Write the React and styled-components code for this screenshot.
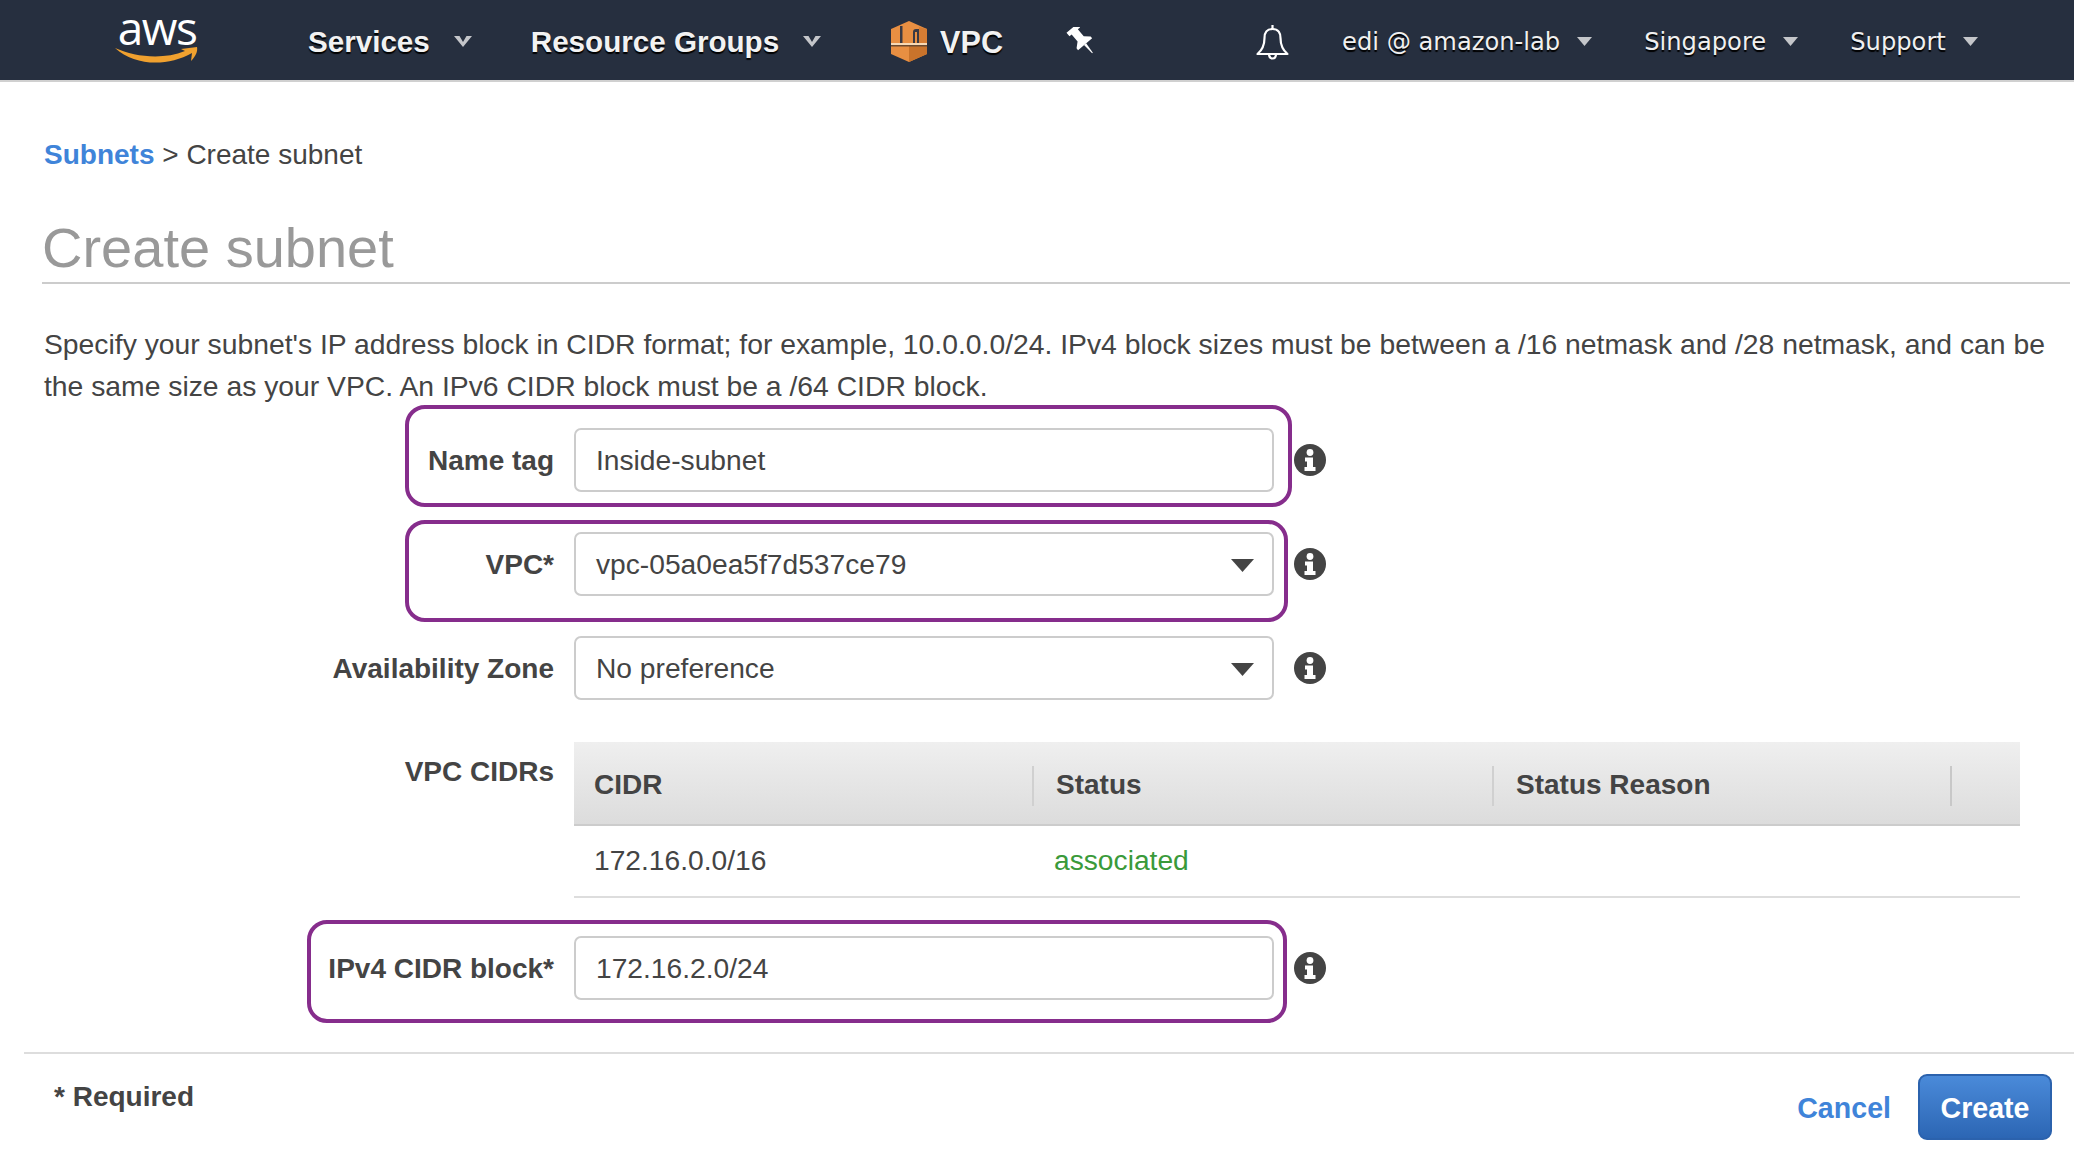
import React from "react";
import styled, { createGlobalStyle } from "styled-components";

const Global = createGlobalStyle`
  html, body { margin: 0; padding: 0; background: #fff; }
  body { width: 2074px; height: 1160px; overflow: hidden; font-family: "Liberation Sans", Arial, sans-serif; color: #444; }
  * { box-sizing: border-box; }
`;

const Header = styled.header`
  display: flex; align-items: center; height: 82px; padding-top: 3px;
  background: #262f3f; border-bottom: 2px solid #d0d0d0;
`;
const Logo = styled.div`
  display: flex; flex-direction: column; align-items: center; width: 84px; margin-left: 115px; margin-top: -11px;
`;
const LogoText = styled.span`
  font: 400 46px/40px "Open Sans", sans-serif; color: #fff; letter-spacing: -1.5px; height: 40px;
`;
const Smile = styled.svg`
  width: 84px; height: 18px; margin-top: 0;
`;
const NavMain = styled.a`
  display: flex; align-items: center; margin-left: ${p => p.$ml}px;
  font: 700 ${p => p.$size || 29.6}px/40px "Liberation Sans", sans-serif; color: #f2f2f2;
  text-shadow: 0 2px 1px #000; white-space: nowrap;
`;
const NavUser = styled.a`
  display: flex; align-items: center; margin-left: ${p => p.$ml}px;
  font: 400 24.2px/40px "DejaVu Sans", sans-serif; color: #f0f0f0;
  text-shadow: 0 2px 1px #000; white-space: nowrap;
`;
const Chevron = styled.svg`
  width: ${p => p.$w}px; height: 11px; margin-left: ${p => p.$ml}px; flex: none;
`;
const ServiceIcon = styled.svg`
  width: 36px; height: 41px; margin-left: ${p => p.$ml}px; margin-right: 13px; flex: none;
`;
const PinIcon = styled.svg`
  width: 28px; height: 28px; margin-left: 62px; margin-top: -2px; flex: none;
`;
const BellIcon = styled.svg`
  width: 35px; height: 36px; margin-left: 162px; flex: none;
`;

const Main = styled.main`
  padding: 52px 4px 0 42px;
`;
const Breadcrumb = styled.div`
  font-size: 28px; line-height: 42px; padding-left: 2px; white-space: nowrap;
`;
const Crumb = styled.a`
  color: #3f84d9; font-weight: 700;
`;
const Title = styled.h1`
  margin: 40px 0 0; font-size: 56px; font-weight: 400; line-height: 64px; color: #999;
  padding-bottom: 2px; border-bottom: 2px solid #ccc; height: 68px;
`;
const Intro = styled.p`
  margin: 39px 0 0; padding-left: 2px; font-size: 28.3px; line-height: 42px; width: 2030px;
`;
const Form = styled.div`
  margin: 21px 0 0 2px;
`;
const Row = styled.div`
  position: relative; display: flex; align-items: ${p => p.$top ? "flex-start" : "center"};
  margin-top: ${p => p.$mt || 0}px;
`;
const Label = styled.label`
  width: 510px; margin-right: 20px; text-align: right; font-weight: 700; font-size: 28px; line-height: 42px;
  padding-top: ${p => p.$pt || 1}px; white-space: nowrap; flex: none;
`;
const Field = styled.input`
  display: block; width: 700px; height: 64px; padding: 1px 20px 0; flex: none;
  border: 2px solid #ccc; border-radius: 7px; background: #fff; outline: none;
  font: 400 28.2px "Liberation Sans", sans-serif; color: #444;
`;
const Select = styled.div`
  display: flex; align-items: center; justify-content: space-between;
  width: 700px; height: 64px; padding: 1px 18px 0 20px; flex: none;
  border: 2px solid #ccc; border-radius: 7px; background: #fff;
  font-size: 28.2px; color: #444;
`;
const SelectCaret = styled.svg`
  width: 23px; height: 13px; flex: none; margin-top: 1px;
`;
const Info = styled.svg`
  width: 32px; height: 32px; margin-left: 20px; flex: none;
`;
const Highlight = styled.div`
  position: absolute; left: ${p => p.$left}px; width: ${p => p.$width}px;
  top: ${p => p.$top}px; bottom: ${p => p.$bottom}px;
  border: 4px solid #862d8c; border-radius: 20px; pointer-events: none;
`;
const Table = styled.div`
  width: 1446px; flex: none;
`;
const THead = styled.div`
  display: grid; grid-template-columns: 460px 460px 458px 68px; align-items: center; height: 84px; padding-top: 8px;
  background: linear-gradient(#efefef, #dcdcdc); border-bottom: 2px solid #ccc;
`;
const Th = styled.div`
  height: 40px; line-height: 38px; padding-left: ${p => p.$pl}px; font-weight: 700; font-size: 28px;
  border-right: 2px solid ${p => p.$sep || "transparent"}; margin-top: -2px; white-space: nowrap;
`;
const TBody = styled.div`
  display: grid; grid-template-columns: 460px 986px; align-items: center; height: 72px; padding-bottom: 2px;
  border-bottom: 2px solid #ddd;
`;
const Td = styled.div`
  padding-left: ${p => p.$pl}px; font-size: 28.2px; color: ${p => p.$color || "#444"};
`;
const Footer = styled.footer`
  display: flex; align-items: flex-start; justify-content: space-between;
  margin: 52px 0 0 24px; padding: 20px 22px 0 30px; border-top: 2px solid #ddd;
`;
const Required = styled.div`
  font-weight: 700; font-size: 28px; line-height: 42px; margin-top: 2px;
`;
const Actions = styled.div`
  display: flex; align-items: center;
`;
const Cancel = styled.a`
  font-weight: 700; font-size: 28.6px; color: #3f84d9; margin-right: 27px; padding-top: 2px;
`;
const Create = styled.button`
  width: 134px; height: 66px; padding: 2px 0 0; border: 2px solid #2b62ad; border-radius: 9px;
  background: linear-gradient(#4a8ad9, #2c66b4); color: #fff;
  font: 700 28.6px "Liberation Sans", sans-serif;
`;

const NavChevron = () => (
  <Chevron $w={20} $ml={23} viewBox="0 0 20 11"><path d="M1 0h5.500L10 6l3.500-6H19l-9 11z" fill="#c4c6ca" /></Chevron>
);
const UserCaret = () => (
  <Chevron $w={15} $ml={17} viewBox="0 0 15 11"><path d="M0 1h15L7.500 10z" fill="#c4c6ca" /></Chevron>
);
const InfoIcon = () => (
  <Info viewBox="0 0 32 32">
    <circle cx="16" cy="16" r="16" fill="#444" />
    <circle cx="16" cy="8.500" r="3.400" fill="#fff" />
    <path d="M11 13.500h8v9.500h2.500v4h-11v-4H13v-5.500h-2z" fill="#fff" />
  </Info>
);
const Caret = () => (
  <SelectCaret viewBox="0 0 23 13"><path d="M0 0h23L11.500 13z" fill="#444" /></SelectCaret>
);

export default function App() {
  return (
    <>
      <Global />
      <Header>
        <Logo>
          <LogoText>aws</LogoText>
          <Smile viewBox="0 0 84 18">
            <path d="M0 1c20 9 48 12 70 3l-4-2 16-2c1 5-2 10-6 14l1-8C52 20 20 19 0 1z" fill="#f0a12f" />
          </Smile>
        </Logo>
        <NavMain $ml={109}>Services<NavChevron /></NavMain>
        <NavMain $ml={58}>Resource Groups<NavChevron /></NavMain>
        <ServiceIcon $ml={69} viewBox="0 0 36 41">
          <path d="M18 0l18 8v25l-18 8-18-8V8z" fill="#e88f42" />
          <path d="M18 25h18v8l-18 8z" fill="#c9732b" />
          <path d="M28 6l8 2v14h-8z" fill="#d67d33" />
          <path d="M9 5h2.500v17H9z" fill="#3a3a44" />
          <path d="M22 22V11c0-2 1-3 3-3h3v14h-2V11h-2v11z" fill="#3a3a44" />
          <rect x="0" y="22" width="36" height="2" fill="#f7d9b5" />
          <rect x="0" y="24" width="36" height="1.500" fill="#6b4a30" />
        </ServiceIcon>
        <NavMain $ml={0} $size={30.6}>VPC</NavMain>
        <PinIcon viewBox="0 0 28 28">
          <g transform="translate(9 4) rotate(-40) scale(1.15)" fill="#fff">
            <path d="M-6-3H6v4H3.500v8L8 13v2H-8v-2l4.500-4V1H-6z" />
            <path d="M-1.200 15h2.400l-.8 10h-.8z" />
          </g>
        </PinIcon>
        <BellIcon viewBox="0 0 35 36" fill="none" stroke="#fff" strokeWidth="2.200">
          <path d="M17.500 5c-6 0-8 4-8 9 0 6-1 11-7 16h30c-6-5-7-10-7-16 0-5-2-9-8-9z" strokeLinejoin="round" />
          <path d="M17.500 1v4M14 30c0 6 7 6 7 0" />
        </BellIcon>
        <NavUser $ml={52}>edi @ amazon-lab<UserCaret /></NavUser>
        <NavUser $ml={52}>Singapore<UserCaret /></NavUser>
        <NavUser $ml={52}>Support<UserCaret /></NavUser>
      </Header>
      <Main>
        <Breadcrumb><Crumb>Subnets</Crumb> &gt; Create subnet</Breadcrumb>
        <Title>Create subnet</Title>
        <Intro>
          Specify your subnet's IP address block in CIDR format; for example, 10.0.0.0/24. IPv4 block sizes must be between a /16 netmask and /28 netmask, and can be the same size as your VPC. An IPv6 CIDR block must be a /64 CIDR block.
        </Intro>
        <Form>
          <Row>
            <Highlight $left={361} $width={887} $top={-23} $bottom={-15} />
            <Label>Name tag</Label>
            <Field defaultValue="Inside-subnet" readOnly />
            <InfoIcon />
          </Row>
          <Row $mt={40}>
            <Highlight $left={361} $width={883} $top={-12} $bottom={-26} />
            <Label>VPC*</Label>
            <Select>vpc-05a0ea5f7d537ce79<Caret /></Select>
            <InfoIcon />
          </Row>
          <Row $mt={40}>
            <Label>Availability Zone</Label>
            <Select>No preference<Caret /></Select>
            <InfoIcon />
          </Row>
          <Row $mt={42} $top>
            <Label $pt={9}>VPC CIDRs</Label>
            <Table>
              <THead>
                <Th $pl={20} $sep="#d0d0d0">CIDR</Th>
                <Th $pl={22} $sep="#d0d0d0">Status</Th>
                <Th $pl={22} $sep="#c8c8c8">Status Reason</Th>
                <Th $pl={0} />
              </THead>
              <TBody>
                <Td $pl={20}>172.16.0.0/16</Td>
                <Td $pl={20} $color="#3a9a3a">associated</Td>
              </TBody>
            </Table>
          </Row>
          <Row $mt={38}>
            <Highlight $left={263} $width={980} $top={-16} $bottom={-23} />
            <Label>IPv4 CIDR block*</Label>
            <Field defaultValue="172.16.2.0/24" readOnly />
            <InfoIcon />
          </Row>
        </Form>
      </Main>
      <Footer>
        <Required>* Required</Required>
        <Actions>
          <Cancel>Cancel</Cancel>
          <Create>Create</Create>
        </Actions>
      </Footer>
    </>
  );
}
